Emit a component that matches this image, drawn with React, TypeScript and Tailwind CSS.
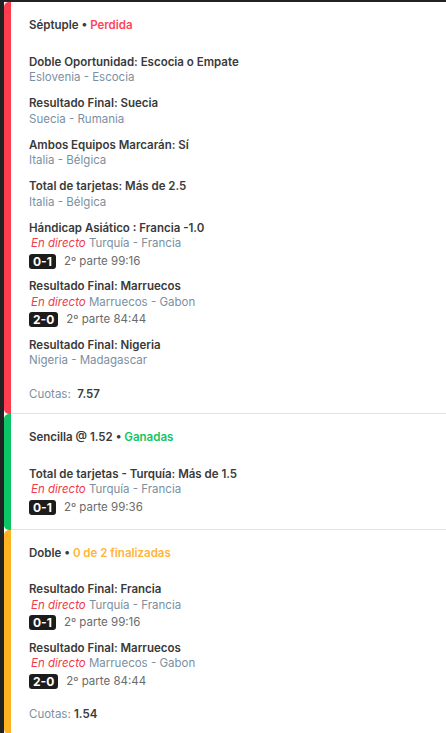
type Leg = {
  title: string
  teams: string
  live?: boolean
  score?: string
  time?: string
}

type Bet = {
  label: string
  status: string
  bar: string
  statusColor: string
  legs: Leg[]
  odds?: string
  oddsGap?: boolean
  extraBottom?: boolean
}

const bets: Bet[] = [
  {
    label: 'Séptuple',
    status: 'Perdida',
    bar: 'bg-[#ff3d4f]',
    statusColor: 'text-[#ff4457]',
    odds: '7.57',
    oddsGap: true,
    legs: [
      { title: 'Doble Oportunidad: Escocia o Empate', teams: 'Eslovenia - Escocia' },
      { title: 'Resultado Final: Suecia', teams: 'Suecia - Rumania' },
      { title: 'Ambos Equipos Marcarán: Sí', teams: 'Italia - Bélgica' },
      { title: 'Total de tarjetas: Más de 2.5', teams: 'Italia - Bélgica' },
      { title: 'Hándicap Asiático : Francia -1.0', teams: 'Turquía - Francia', live: true, score: '0-1', time: '2º parte 99:16' },
      { title: 'Resultado Final: Marruecos', teams: 'Marruecos - Gabon', live: true, score: '2-0', time: '2º parte 84:44' },
      { title: 'Resultado Final: Nigeria', teams: 'Nigeria - Madagascar' },
    ],
  },
  {
    label: 'Sencilla @ 1.52',
    status: 'Ganadas',
    bar: 'bg-[#0cc566]',
    statusColor: 'text-[#0cc566]',
    extraBottom: true,
    legs: [
      { title: 'Total de tarjetas - Turquía: Más de 1.5', teams: 'Turquía - Francia', live: true, score: '0-1', time: '2º parte 99:36' },
    ],
  },
  {
    label: 'Doble',
    status: '0 de 2 finalizadas',
    bar: 'bg-[#ffb323]',
    statusColor: 'text-[#ffb43a]',
    odds: '1.54',
    legs: [
      { title: 'Resultado Final: Francia', teams: 'Turquía - Francia', live: true, score: '0-1', time: '2º parte 99:16' },
      { title: 'Resultado Final: Marruecos', teams: 'Marruecos - Gabon', live: true, score: '2-0', time: '2º parte 84:44' },
    ],
  },
]

function LegRow({ leg }: { leg: Leg }) {
  return (
    <div className="flex flex-col">
      <div className="text-[11.5px] leading-[15.5px] font-semibold text-[#3a3a3a]">{leg.title}</div>
      <div className="text-[11.5px] leading-[15.5px] text-[#7b8fa3]">
        {leg.live && <span className="ml-[2px] italic text-[#f03a4e]">En directo </span>}
        {leg.teams}
      </div>
      {leg.score && (
        <div className="mt-[2px] flex items-center gap-[8px]">
          <span className="rounded-[3px] bg-[#1c1c1c] px-[4px] text-[12px] leading-[15px] font-bold text-white">
            {leg.score}
          </span>
          <span className="text-[11.5px] leading-[15px] text-[#6b6b6b]">{leg.time}</span>
        </div>
      )}
    </div>
  )
}

function BetCard({ bet }: { bet: Bet }) {
  return (
    <div className="flex">
      <div className={`w-[7px] shrink-0 rounded-l-[5px] ${bet.bar}`} />
      <div className={`flex-1 border-b border-[#e2e2e2] pl-[18px] pt-[16px] ${bet.extraBottom ? 'pb-[14px]' : 'pb-[11px]'}`}>
        <div className="text-[11.5px] leading-[15.5px] font-semibold text-[#3a3a3a]">
          {bet.label} • <span className={bet.statusColor}>{bet.status}</span>
        </div>
        <div className="mt-[21px] flex flex-col gap-[10.5px]">
          {bet.legs.map((leg, i) => (
            <LegRow key={i} leg={leg} />
          ))}
        </div>
        {bet.odds && (
          <div className="mt-[18px] text-[11.5px] leading-[15.5px] text-[#7b8fa3]">
            Cuotas:{bet.oddsGap ? '\u00a0 ' : ' '}
            <span className="font-semibold text-[#3a3a3a]">{bet.odds}</span>
          </div>
        )}
      </div>
    </div>
  )
}

export default function App() {
  return (
    <div className="min-h-[733px] w-[446px] bg-[#222] pl-[4px] pt-[2px]" style={{ fontFamily: 'Inter, "Noto Sans", sans-serif' }}>
      <div className="min-h-[731px] bg-white">
        {bets.map((bet, i) => (
          <BetCard key={i} bet={bet} />
        ))}
      </div>
    </div>
  )
}
